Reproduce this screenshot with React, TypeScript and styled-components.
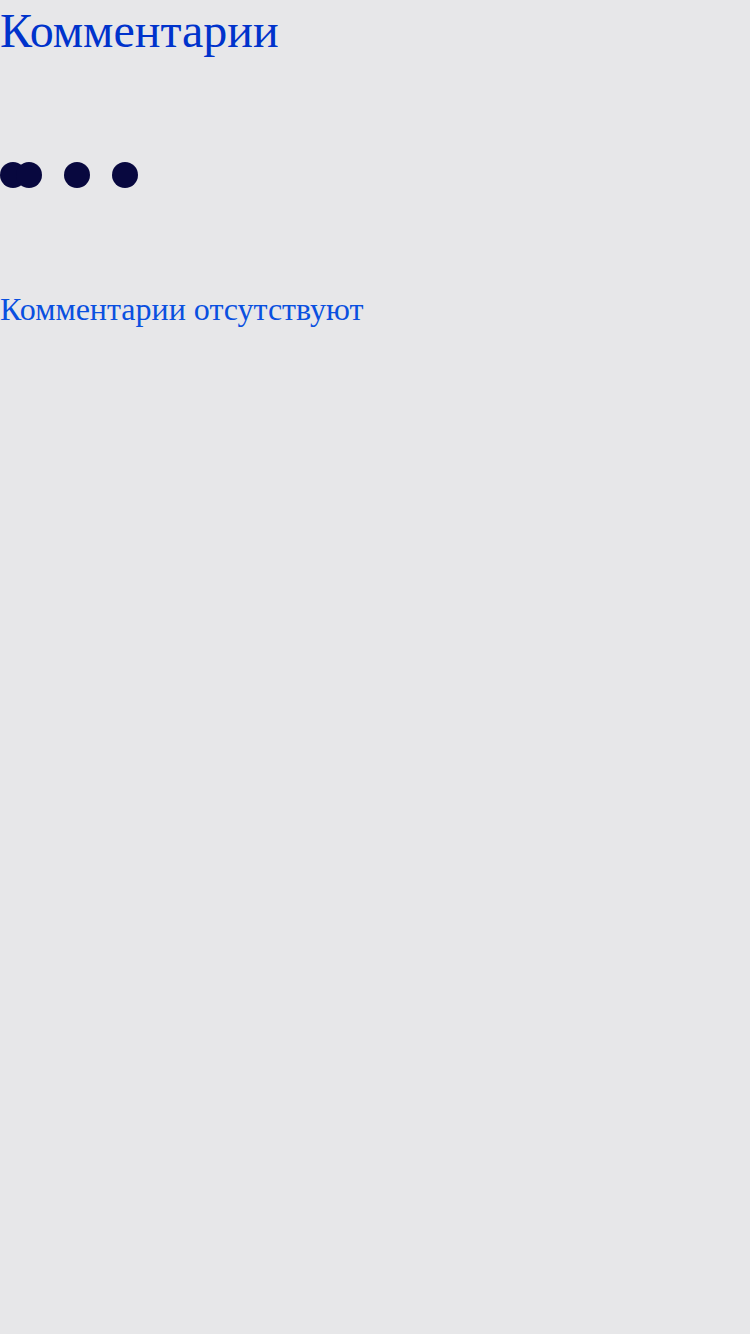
import React from "react";
import styled, { createGlobalStyle } from "styled-components";

const Global = createGlobalStyle`
  html, body { margin: 0; padding: 0; background: #e7e7e9; }
  body { font-family: "Liberation Serif", "Times New Roman", serif; }
`;

const Page = styled.div`
  min-height: 1334px;
  background: #e7e7e9;
  display: flex;
  flex-direction: column;
`;

const Title = styled.h1`
  margin: 3px 0 0 0;
  font-size: 48px;
  font-weight: 400;
  color: #0033cc;
  line-height: 55px;
`;

const Loader = styled.div`
  position: relative;
  height: 26px;
  width: 140px;
  margin-top: 104px;
`;

const Dot = styled.span<{ $left: number }>`
  position: absolute;
  top: 0;
  left: ${(p) => p.$left}px;
  width: 26px;
  height: 26px;
  border-radius: 50%;
  background: #08083f;
`;

const Empty = styled.p`
  margin: 103px 0 0 0;
  font-size: 32px;
  line-height: 37px;
  color: #0a50e0;
`;

export default function App() {
  return (
    <Page>
      <Global />
      <Title>Комментарии</Title>
      <Loader>
        <Dot $left={0} />
        <Dot $left={16} />
        <Dot $left={64} />
        <Dot $left={112} />
      </Loader>
      <Empty>Комментарии отсутствуют</Empty>
    </Page>
  );
}
